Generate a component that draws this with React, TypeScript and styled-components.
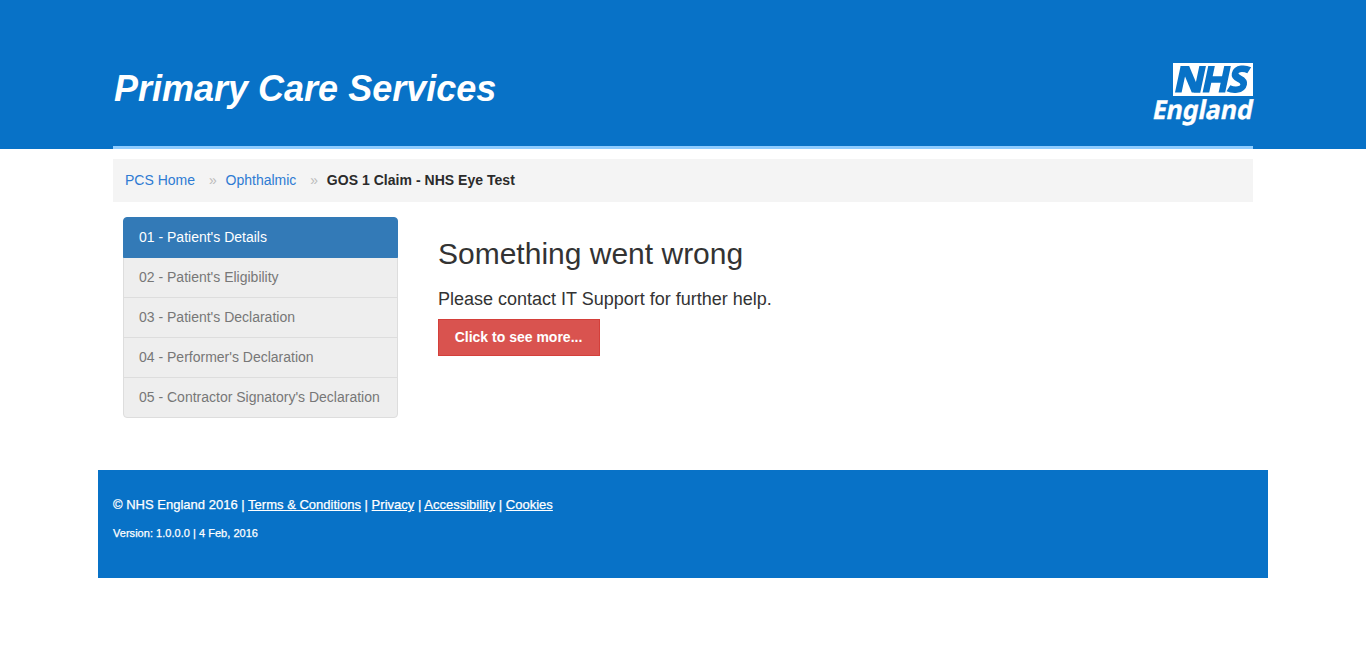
import React from "react";
import styled, { createGlobalStyle } from "styled-components";

const GlobalStyle = createGlobalStyle`
  *, *::before, *::after { box-sizing: border-box; }
  body {
    margin: 0;
    background: #fff;
    color: #333;
    font: 14px/20px "Liberation Sans", Arial, sans-serif;
  }
`;

const Header = styled.header`
  height: 149px;
  background: #0872c7;
`;

const HeaderInner = styled.div`
  width: 1140px;
  height: 149px;
  margin: 0 auto;
  padding-top: 63px;
  display: flex;
  justify-content: space-between;
  align-items: flex-start;
  border-bottom: 3px solid #8eccff;
`;

const SiteTitle = styled.h1`
  margin: 5px 0 0 1px;
  font-size: 36px;
  line-height: 42px;
  font-style: italic;
  font-weight: bold;
  color: #fff;
`;

const Breadcrumb = styled.nav`
  width: 1140px;
  height: 43px;
  margin: 10px auto 0;
  padding: 0 12px 2px;
  display: flex;
  align-items: center;
  background: #f4f4f4;
`;

const Crumb = styled.a`
  color: #2e7bd3;
  text-decoration: none;
`;

const Divider = styled.span`
  width: 30.5px;
  padding-left: 14px;
  color: #bbb;
`;

const CurrentCrumb = styled.strong`
  color: #2b2b2b;
  letter-spacing: 0.03px;
`;

const Main = styled.main`
  width: 1140px;
  height: 253px;
  margin: 15px auto 0;
  padding-left: 10px;
  display: flex;
  align-items: flex-start;
  gap: 40px;
`;

const Steps = styled.ul`
  width: 275px;
  margin: 0;
  padding: 0;
  list-style: none;
`;

const Step = styled.li<{ $active?: boolean }>`
  height: 41px;
  padding: 9px 15px;
  margin-bottom: -1px;
  position: relative;
  z-index: ${(p) => (p.$active ? 1 : 0)};
  border: 1px solid ${(p) => (p.$active ? "#337ab7" : "#ddd")};
  background: ${(p) => (p.$active ? "#337ab7" : "#eee")};
  color: ${(p) => (p.$active ? "#fff" : "#777")};
  &:first-child { border-radius: 4px 4px 0 0; }
  &:last-child { border-radius: 0 0 4px 4px; margin-bottom: 0; }
`;

const Message = styled.section`
  padding-top: 20px;
`;

const ErrorTitle = styled.h2`
  margin: 0;
  font-size: 30px;
  line-height: 33px;
  font-weight: normal;
`;

const ErrorText = styled.p`
  margin: 19px 0 9px;
  font-size: 18px;
  line-height: 21px;
`;

const MoreButton = styled.button`
  width: 162px;
  height: 37px;
  padding: 0 1px 2px 0;
  border: 1px solid #d43f3a;
  background: #d9534f;
  color: #fff;
  font: bold 14px/20px "Liberation Sans", Arial, sans-serif;
`;

const Footer = styled.footer`
  width: 1170px;
  height: 108px;
  margin: 0 auto;
  padding: 26px 15px 0;
  background: #0872c7;
  color: #fff;
  -webkit-text-stroke: 0.25px #fff;
`;

const Legal = styled.p`
  margin: 0;
  font-size: 13px;
  line-height: 18px;
  letter-spacing: 0.01px;
`;

const Version = styled.p`
  margin: 11px 0 0;
  font-size: 11px;
  line-height: 16px;
  letter-spacing: 0.03px;
`;

const FooterLink = styled.a`
  color: #fff;
  text-decoration: underline;
`;

const LogoSvg = styled.svg`
  display: block;
  overflow: visible;
`;

const Logo = () => (
  <LogoSvg width="101" height="65" viewBox="0 0 101 65" role="img" aria-label="NHS England">
    <rect x="21" y="0" width="80" height="33" fill="#fff" />
    <g transform="translate(0 29.500) skewX(-12)" fill="none" stroke="#0872c7" strokeWidth="6.600">
      <path d="M26.300 0V-26.500M45 0V-26.500M53.900 0V-26.500M69.900 0V-26.500M53.900 -13H69.900" />
      <path d="M23 -26.500H31.500L48.300 0H39.800Z" fill="#0872c7" stroke="none" />
      <path d="M92.500 -22.300C87 -24.500 79 -24.600 79 -19.300C79 -13 90 -14.500 90 -7.700C90 -1.800 81 -2 75.500 -4.300" />
    </g>
    <text
      transform="translate(-0.600 56) skewX(-11)"
      fill="#fff"
      stroke="#fff"
      strokeWidth="0.350"
      fontFamily='"Noto Sans", sans-serif'
      fontSize="26"
      fontWeight="700"
      textLength="100"
      lengthAdjust="spacingAndGlyphs"
    >
      England
    </text>
  </LogoSvg>
);

const steps = [
  "01 - Patient's Details",
  "02 - Patient's Eligibility",
  "03 - Patient's Declaration",
  "04 - Performer's Declaration",
  "05 - Contractor Signatory's Declaration",
];

const legalLinks = ["Terms & Conditions", "Privacy", "Accessibility", "Cookies"];

export default function App() {
  return (
    <>
      <GlobalStyle />
      <Header>
        <HeaderInner>
          <SiteTitle>Primary Care Services</SiteTitle>
          <Logo />
        </HeaderInner>
      </Header>
      <Breadcrumb>
        <Crumb href="#">PCS Home</Crumb>
        <Divider>»</Divider>
        <Crumb href="#">Ophthalmic</Crumb>
        <Divider>»</Divider>
        <CurrentCrumb>GOS 1 Claim - NHS Eye Test</CurrentCrumb>
      </Breadcrumb>
      <Main>
        <Steps>
          {steps.map((s, i) => (
            <Step key={s} $active={i === 0}>{s}</Step>
          ))}
        </Steps>
        <Message>
          <ErrorTitle>Something went wrong</ErrorTitle>
          <ErrorText>Please contact IT Support for further help.</ErrorText>
          <MoreButton>Click to see more...</MoreButton>
        </Message>
      </Main>
      <Footer>
        <Legal>
          © NHS England 2016
          {legalLinks.map((l) => (
            <React.Fragment key={l}>
              {" | "}
              <FooterLink href="#">{l}</FooterLink>
            </React.Fragment>
          ))}
        </Legal>
        <Version>Version: 1.0.0.0 | 4 Feb, 2016</Version>
      </Footer>
    </>
  );
}
